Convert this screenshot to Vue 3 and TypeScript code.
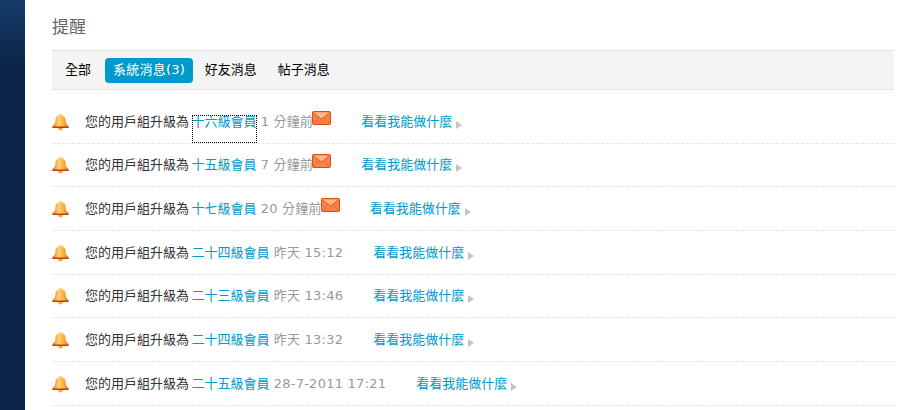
<script setup lang="ts">
interface Row { level: string; time: string; mail: boolean; focus?: boolean }
const rows: Row[] = [
  { level: '十六級會員', time: '1 分鐘前', mail: true, focus: true },
  { level: '十五級會員', time: '7 分鐘前', mail: true },
  { level: '十七級會員', time: '20 分鐘前', mail: true },
  { level: '二十四級會員', time: '昨天 15:12', mail: false },
  { level: '二十三級會員', time: '昨天 13:46', mail: false },
  { level: '二十四級會員', time: '昨天 13:32', mail: false },
  { level: '二十五級會員', time: '28-7-2011 17:21', mail: false },
]
const tabs = ['全部', '系統消息(3)', '好友消息', '帖子消息']
</script>

<template>
  <div class="page">
    <aside class="side"></aside>
    <main class="main">
      <h1 class="title">提醒</h1>
      <nav class="tabs">
        <a v-for="(t, i) in tabs" :key="t" class="tab" :class="{ on: i === 1 }">{{ t }}</a>
      </nav>
      <ul class="list">
        <li v-for="(r, i) in rows" :key="i" class="row">
          <svg class="bell" width="17" height="17" viewBox="0 0 17 17">
            <defs>
              <linearGradient :id="'b' + i" x1="0" y1="0" x2="1" y2="0">
                <stop offset="0" stop-color="#ea7d10" />
                <stop offset="0.4" stop-color="#ffd27a" />
                <stop offset="0.65" stop-color="#ffb53e" />
                <stop offset="1" stop-color="#e8760c" />
              </linearGradient>
            </defs>
            <path d="M6.500 .5h4v1.200l1.800.8c1.200 1 1.200 2.800 1.300 4.500.2 2 .9 3.800 2.900 4.800v2H.5v-2c2-1 2.700-2.800 2.900-4.800.1-1.700.1-3.500 1.300-4.500l1.800-.8z" :fill="`url(#b${i})`" />
            <path d="M.5 12.500h16v1.500H.5z" fill="#b9430c" />
            <path d="M6 14h5l-1 2.200H7z" fill="#f6a53c" />
          </svg>
          <span class="text"><span class="lead">您的用戶組升級為</span><a class="level" :class="{ focus: r.focus }">{{ r.level }}</a> <span class="time">{{ r.time }}</span><svg v-if="r.mail" class="mail" width="19" height="14" viewBox="0 0 19 14">
            <rect x=".5" y=".5" width="18" height="13" rx="1" fill="#fb8246" stroke="#d94f0c" />
            <path d="M1 1.500l8.500 6.500L18 1.500" fill="#ffb98a" stroke="#e0581a" />
            <path d="M1 13l6-6.500M18 13l-6-6.500" fill="none" stroke="#e8692e" />
          </svg><a class="more">看看我能做什麼<i class="arrow"></i></a></span>
        </li>
      </ul>
    </main>
  </div>
</template>

<style>
html, body { margin: 0; background: #fff; }
</style>

<style scoped>
.page {
  display: flex;
  height: 410px;
  overflow: hidden;
  font-family: "DejaVu Sans", "Noto Sans CJK TC", sans-serif;
  font-size: 13px;
}
.side {
  width: 25px;
  flex: none;
  background: linear-gradient(180deg, #163b69 0, #0c2448 65px, #0c2448 100%);
}
.main {
  flex: 1;
  min-width: 0;
  padding: 0 27px;
}
.title {
  margin: 0;
  height: 50px;
  line-height: 54px;
  font-size: 17px;
  font-weight: 400;
  color: #666;
}
.tabs {
  box-sizing: border-box;
  height: 40px;
  display: flex;
  align-items: center;
  gap: 5px;
  padding-left: 5px;
  background: #f4f4f4;
  border-top: 1px solid #e4e4de;
  border-bottom: 1px solid #e4e4e4;
}
.tab {
  height: 25px;
  line-height: 23px;
  padding: 0 8px;
  border-radius: 4px;
  color: #000;
  white-space: nowrap;
}
.tab.on {
  margin: 0 -1.500px 0 1px;
  letter-spacing: .25px;
  background: #0099cc;
  color: #fff;
}
.list {
  list-style: none;
  margin: 10px 0 0;
  padding: 0;
}
.row {
  box-sizing: border-box;
  height: 43.67px;
  display: flex;
  align-items: center;
  border-bottom: 1px dashed #e4e4e4;
  color: #333;
  white-space: nowrap;
}
.bell { flex: none; margin: 2px 16px 0 0; }
.text { margin-bottom: 2px; }
.lead { margin-right: 2.500px; }
.level {
  color: #0099cc;
  position: relative;
}
.level.focus::after {
  content: "";
  position: absolute;
  box-sizing: border-box;
  left: 0;
  right: 0;
  top: 1px;
  height: 28px;
  border: 1px dotted #000;
}
.time {
  color: #999;
  letter-spacing: .25px;
}
.mail {
  margin-left: -1px;
  vertical-align: 1px;
}
.more {
  color: #0099cc;
  margin-left: 30px;
}
.arrow {
  display: inline-block;
  width: 0;
  height: 0;
  margin-left: 4px;
  vertical-align: -3px;
  border-left: 6px solid #c4c4c4;
  border-top: 4.500px solid transparent;
  border-bottom: 4.500px solid transparent;
}
</style>
